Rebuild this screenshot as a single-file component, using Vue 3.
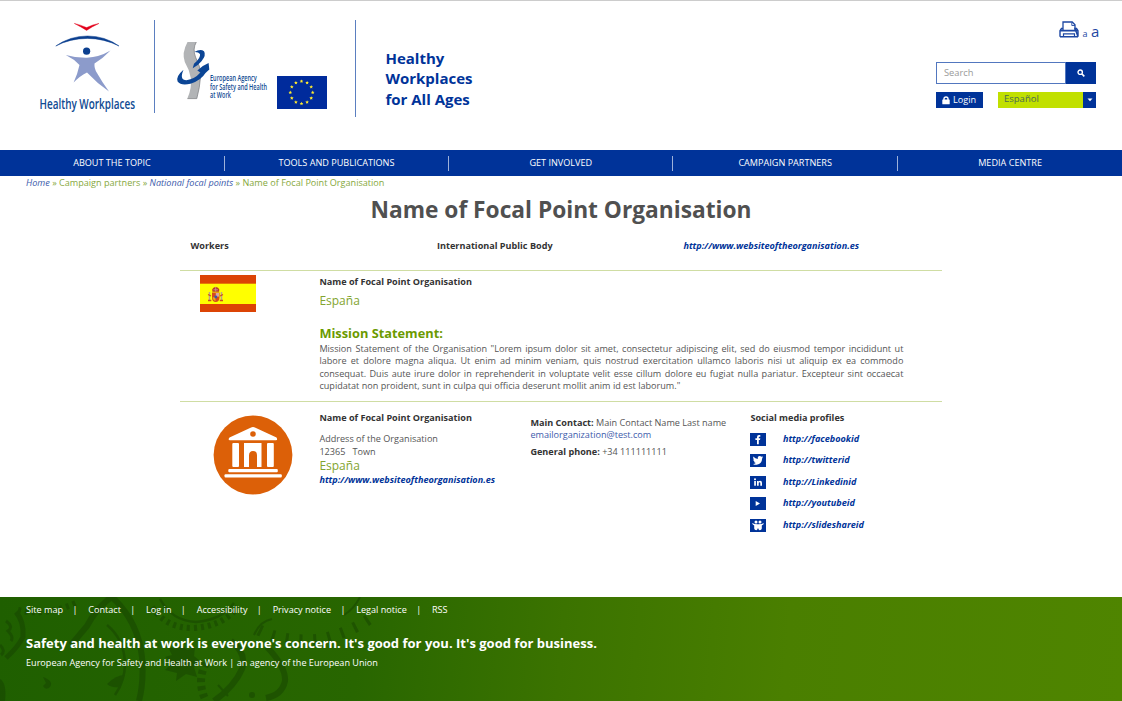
<script setup>
const nav = ['ABOUT THE TOPIC', 'TOOLS AND PUBLICATIONS', 'GET INVOLVED', 'CAMPAIGN PARTNERS', 'MEDIA CENTRE']
const footerLinks = ['Site map', 'Contact', 'Log in', 'Accessibility', 'Privacy notice', 'Legal notice', 'RSS']
const socials = [
  { id: 'facebook', url: 'http://facebookid' },
  { id: 'twitter', url: 'http://twitterid' },
  { id: 'linkedin', url: 'http://Linkedinid' },
  { id: 'youtube', url: 'http://youtubeid' },
  { id: 'slideshare', url: 'http://slideshareid' },
]
const point = (cx, cy, r, deg) => {
  const a = (deg * Math.PI) / 180
  return `${(cx + r * Math.sin(a)).toFixed(2)},${(cy - r * Math.cos(a)).toFixed(2)}`
}
const stars = Array.from({ length: 12 }, (_, i) => {
  const a = (i * Math.PI) / 6
  const cx = 24.5 + 11.2 * Math.sin(a)
  const cy = 16.5 - 11.2 * Math.cos(a)
  return Array.from({ length: 10 }, (_, k) => point(cx, cy, k % 2 ? 0.9 : 1.9, k * 36)).join(' ')
})
</script>

<template>
  <div class="page">
    <header class="header">
      <svg class="hw-logo" viewBox="36 16 104 102" width="104" height="102">
        <path d="M74.3 23.4Q80 24.6 86.6 27.6Q93 24.4 99 23.4Q92 26.6 86.6 30.4Q81 26.8 74.3 23.4Z" fill="#e2001a" stroke="#e2001a" stroke-width=".4" />
        <path d="M55.8 46Q70 36 87.5 36Q105 36 119 46Q104 38.4 87.5 38.4Q70 38.4 55.8 46Z" fill="#0b3f8f" stroke="#0b3f8f" stroke-width=".5" />
        <circle cx="86.6" cy="51.2" r="3.6" fill="#0b3f8f" />
        <path d="M65.8 55Q76 58 87 57.8Q99 57.4 110.5 50.6Q103 58.5 94.5 63.5Q94 68.5 97 73Q102 82 109 91.6Q97.5 83.6 87 72.4Q79.5 76 73.6 82.6Q77.6 74 79.5 65Q74 59 65.8 55Z" fill="#8c9bcb" />
        <text x="39.5" y="109" textLength="95.5" lengthAdjust="spacingAndGlyphs" class="hw-text">Healthy Workplaces</text>
      </svg>
      <span class="rule rule-a"></span>
      <svg class="osha-logo" viewBox="174 38 98 64" width="98" height="64">
        <path d="M187.5 42H196.3Q192.4 49 195.5 57Q201 67 200.6 76Q199.8 88 196.8 98.6H187.4Q192 88 190.8 78Q189.6 70 184.8 62Q181.5 53 187.5 42Z" fill="#b2b4b6" />
        <path d="M196.3 42Q192.4 49 195.5 57Q201 67 200.6 76Q199.8 88 196.8 98.6H187.4" fill="none" stroke="#77797c" stroke-width=".7" />
        <path d="M194.3 52Q200.500 48.600 204 51.200Q206.500 55 201.500 61.200Q197.500 66 192.700 68.300L194 63.800Q200.800 58 200 54Q198.500 51.800 194.300 52Z" fill="#0b4595" />
        <path d="M208.600 63Q202.500 65.400 197.300 70.500L200.400 72.600Q194.500 79.400 186.500 80.200Q179 80.200 183.500 69.800Q175.600 76.500 177.600 81.500Q181 86 190.500 83.700Q201 80.500 205.500 73L209.300 69.600Z" fill="#0b4595" />
        <text x="210" y="80.6" textLength="46.8" lengthAdjust="spacingAndGlyphs" class="osha-text">European Agency</text>
        <text x="210" y="89.8" textLength="57" lengthAdjust="spacingAndGlyphs" class="osha-text">for Safety and Health</text>
        <text x="210" y="98.2" textLength="21" lengthAdjust="spacingAndGlyphs" class="osha-text">at Work</text>
      </svg>
      <svg class="eu-flag" viewBox="0 0 50 33" width="50" height="33">
        <rect width="50" height="33" fill="#002b9c" />
        <polygon v-for="(s, i) in stars" :key="i" :points="s" fill="#ffec2e" />
      </svg>
      <span class="rule rule-b"></span>
      <div class="slogan">Healthy<br />Workplaces<br />for All Ages</div>
      <div class="tools">
        <div class="access">
          <svg width="20" height="18" viewBox="0 0 20 18" fill="none" stroke="#1d47a3">
            <path d="M4 9V1H13.2L16 3.800V9" stroke-width="1.300" />
            <path d="M12.800 1.500V4.500H16" stroke-width=".9" />
            <path d="M1 15.800V9.800L2.500 7.500H4M16 7.500H17.500L19 9.800V15.800Z" stroke-width="1.400" />
            <path d="M1 9.600H19M1 15.800H19" stroke-width="1.600" />
            <path d="M4.500 15.200V12.800H15.500V15.200" stroke-width="1.200" />
          </svg>
          <span class="a-small">a</span><span class="a-big">a</span>
        </div>
        <div class="search">
          <span class="field">Search</span>
          <span class="go">
            <svg width="8" height="8" viewBox="0 0 8 8" fill="none" stroke="#fff">
              <circle cx="3.2" cy="3.2" r="2.2" stroke-width="1.4" />
              <path d="M5 5L7.3 7.3" stroke-width="1.7" />
            </svg>
          </span>
        </div>
        <div class="row">
          <span class="login">
            <svg width="8" height="9" viewBox="0 0 8 9">
              <path d="M2 4V2.8Q2 1 4 1Q6 1 6 2.8V4" fill="none" stroke="#fff" stroke-width="1.4" />
              <rect x=".3" y="3.6" width="7.4" height="4.6" rx=".5" fill="#fff" />
            </svg>
            Login
          </span>
          <span class="lang">
            <span class="lang-name">Español</span>
            <span class="lang-arrow"><svg width="6" height="4" viewBox="0 0 6 4"><path d="M.5 .6H5.5L3 3.2Z" fill="#fff" /></svg></span>
          </span>
        </div>
      </div>
    </header>

    <nav class="nav"><a v-for="n in nav" :key="n"><span>{{ n }}</span></a></nav>

    <div class="crumbs"><i>Home</i> » Campaign partners » <i>National focal points</i> » Name of Focal Point Organisation</div>

    <main>
      <h1><span>Name of Focal Point Organisation</span></h1>
      <div class="facts">
        <b>Workers</b><b>International Public Body</b><a class="link">http://www.websiteoftheorganisation.es</a>
      </div>

      <section class="mission">
        <svg class="es-flag" width="56" height="37" viewBox="0 0 56 37">
          <rect width="56" height="37" fill="#dc4405" />
          <rect y="8.7" width="56" height="20.3" fill="#ffff00" />
          <path d="M9.5 17V25M21.5 17V25" stroke="#b9a58b" stroke-width="1.5" />
          <path d="M8 19.5L11 21M20 21L23 19.5M8 25.5H11.3M19.8 25.5H23" stroke="#cc4b22" stroke-width="1.3" />
          <path d="M12 17.5H19.5V23Q19 27 15.7 27Q12.3 27 12 23Z" fill="#d54a1d" />
          <path d="M12.6 22.3H15.5V26Q13 25.6 12.6 22.3Z" fill="#eda81c" />
          <path d="M15.8 18H19V21.6H15.8Z" fill="#d9a3a2" />
          <circle cx="15.8" cy="22" r="1.4" fill="#315bad" />
          <path d="M12.4 16.8Q11.5 14 13.5 12.8Q15.7 11 18 12.8Q20 14 19.1 16.8Z" fill="#b73c26" />
          <path d="M13.5 14.8H18M15.7 11.8V16.5" stroke="#cf9ca0" stroke-width=".8" />
        </svg>
        <div class="mission-body">
          <b class="org">Name of Focal Point Organisation</b>
          <div class="country">España</div>
          <h2>Mission Statement:</h2>
          <p>
            <span>Mission Statement of the Organisation "Lorem ipsum dolor sit amet, consectetur adipiscing elit, sed do eiusmod tempor incididunt ut</span>
            <span>labore et dolore magna aliqua. Ut enim ad minim veniam, quis nostrud exercitation ullamco laboris nisi ut aliquip ex ea commodo</span>
            <span>consequat. Duis aute irure dolor in reprehenderit in voluptate velit esse cillum dolore eu fugiat nulla pariatur. Excepteur sint occaecat</span>
            <span class="last">cupidatat non proident, sunt in culpa qui officia deserunt mollit anim id est laborum."</span>
          </p>
        </div>
      </section>

      <section class="details">
        <svg class="building" width="80" height="80" viewBox="0 0 80 80">
          <circle cx="40" cy="40" r="39.4" fill="#dc6008" />
          <g fill="#fff">
            <path d="M40 12Q41 12 43 13L63.5 22.4Q65 25 63 25.3H17Q14.500 25 16.500 22.400L37 13Q39 12 40 12Z" />
            <rect x="19.300" y="28" width="6.700" height="24" rx="1" />
            <path d="M31 28H48.500V52H44V40.500Q44 36 40 36Q36 36 36 40.500V52H31Z" />
            <rect x="54" y="28" width="6.800" height="24" rx="1" />
            <rect x="15.300" y="54" width="49.500" height="3.200" rx="1" />
            <rect x="11.500" y="59.300" width="57.300" height="3.300" rx="1" />
          </g>
          <circle cx="40" cy="19" r="2.800" fill="#dc6008" />
        </svg>
        <div class="address">
          <b class="org">Name of Focal Point Organisation</b>
          <div class="lines">Address of the Organisation<br />12365 &nbsp; Town</div>
          <div class="country">España</div>
          <a class="link">http://www.websiteoftheorganisation.es</a>
        </div>
        <div class="contact">
          <div><b>Main Contact:</b> Main Contact Name Last name</div>
          <div class="mail">emailorganization@test.com</div>
          <div class="phone"><b>General phone:</b> +34 111111111</div>
        </div>
        <div class="social">
          <b class="org">Social media profiles</b>
          <ul>
            <li v-for="s in socials" :key="s.id">
              <svg width="16" height="13" viewBox="0 0 16 13">
                <rect width="16" height="13" fill="#003399" />
                <path v-if="s.id === 'facebook'" d="M7 11.300V7H5.400V5.200H7V4Q7 2 9 2H10.300V3.700H9.400Q8.800 3.700 8.800 4.300V5.200H10.300L10 7H8.800V11.300Z" fill="#fff" />
                <path v-else-if="s.id === 'twitter'" d="M3.300 2.600Q5.200 4.800 7.800 4.900Q7.400 2.300 9.700 2.100Q10.700 2.100 11.300 2.800L12.800 2.300L12.100 3.500L13.100 3.300L12.100 4.500Q12 9.900 6.700 10.800Q4.600 11 3 9.900Q4.800 9.900 5.800 9Q4.400 8.800 3.900 7.600H4.800Q3.200 6.900 3.200 5.400L4 5.600Q2.700 4.400 3.300 2.600Z" fill="#fff" />
                <g v-else-if="s.id === 'linkedin'" fill="#fff">
                  <circle cx="5" cy="3.300" r="1" /><rect x="4.200" y="5" width="1.700" height="4.700" />
                  <path d="M7 5H8.600V5.700Q9.200 4.800 10.200 4.800Q12 4.900 12 7V9.700H10.300V7.300Q10.300 6.200 9.500 6.200Q8.700 6.300 8.700 7.300V9.700H7Z" />
                </g>
                <path v-else-if="s.id === 'youtube'" d="M5.700 4L10 6.500L5.700 9Z" fill="#fff" />
                <g v-else fill="#fff">
                  <circle cx="6" cy="2.900" r="1.500" /><circle cx="10" cy="2.900" r="1.500" />
                  <path d="M2 4Q4.500 5.400 8 5.300Q11.500 5.400 14 4Q13.500 5.800 11.800 6.600V9.500Q11.500 11.200 9.800 11.200Q8.500 11 8.400 9.500H7.600Q7.500 11 6.200 11.200Q4.500 11.200 4.200 9.500V6.600Q2.500 5.800 2 4Z" />
                </g>
              </svg>
              <a class="link">{{ s.url }}</a>
            </li>
          </ul>
        </div>
      </section>
    </main>

    <footer>
      <svg class="gears" width="480" height="104" viewBox="0 0 480 104" fill="none" stroke="#174300">
        <g opacity=".5">
          <path d="M71 48L87 29Q97 10 114 -2M112 0Q138 24 142 60Q144 85 139 104" stroke-width="6" />
          <path d="M107 28Q124 42 125 66Q125 84 115 98" stroke-width="2.500" />
          <path d="M107 87Q116 78 125 78L119 90Q112 91 107 87Z" fill="#174300" stroke="none" />
          <path d="M16 15Q24 24 23 40Q18 50 6 61" stroke-width="5" />
          <path d="M6 24Q14 30 8 34Q14 40 11 44M0 48Q6 54 1 58" stroke-width="3" />
          <path d="M0 82Q7 86 5 104H0Z" fill="#174300" stroke="none" />
          <path d="M18 13Q44 20 76 6" stroke-width="6" stroke-dasharray="3 4" />
          <path d="M43 80Q54 84 50 90Q46 94 43 89L46 86Z" fill="#174300" stroke="none" />
          <path d="M160 2Q172 24 196 25Q222 23 234 6" stroke-width="2.500" />
          <path d="M152 10Q166 31 192 31Q222 30 238 10" stroke-width="6" stroke-dasharray="3 4" />
          <path d="M168 50L176 52L181 47L187 53L195 50L194 59L200 64L194 70L197 80L186 77L176 84L177 76L165 73L172 66L165 60L172 58Z" fill="#174300" stroke="none" />
          <path d="M231 44Q247 56 242 72Q234 90 214 104M267 50Q286 70 285 84Q282 98 266 101" stroke-width="6" />
          <path d="M206 66Q196 84 206 104" stroke-width="8" stroke-dasharray="4 4" />
          <path d="M259 33Q284 46 322 42Q354 34 372 20" stroke-width="11" stroke-dasharray="3 11" />
          <path d="M254 38Q260 24 272 22M344 18Q354 12 360 0M218 88L228 99" stroke-width="2" />
          <circle cx="252" cy="98" r="3" fill="#174300" stroke="none" />
        </g>
      </svg>
      <div class="foot-body">
        <div class="foot-links">
          <template v-for="(f, i) in footerLinks" :key="f"><span v-if="i" class="bar">|</span><a>{{ f }}</a></template>
        </div>
        <div class="motto"><span>Safety and health at work is everyone's concern. It's good for you. It's good for business.</span></div>
        <div class="agency">European Agency for Safety and Health at Work | an agency of the European Union</div>
      </div>
    </footer>
  </div>
</template>

<style>
body { margin: 0; background: #fff; }
</style>

<style scoped>
* { box-sizing: border-box; }
.page { width: 1122px; height: 701px; overflow: hidden; display: flex; flex-direction: column; font: 9.100px/12.400px "Open Sans", sans-serif; color: #555; background: #fff; }
.header { height: 150px; flex: none; border-top: 1px solid #ccc; display: flex; align-items: flex-start; padding-left: 36px; }
.header svg { display: block; flex: none; overflow: visible; }
.hw-logo { margin-top: 15px; }
.hw-text { font: 600 14.500px "Open Sans", sans-serif; fill: #0f4a92; }
.rule { width: 1px; flex: none; background: #5b7fc0; margin-top: 19px; }
.rule-a { height: 93px; margin-left: 14.400px; }
.rule-b { height: 97px; margin-left: 27.600px; }
.osha-logo { margin: 37px 0 0 18.600px; }
.osha-text { font: 600 8.600px "Open Sans", sans-serif; fill: #0f4a92; }
.eu-flag { margin: 74.500px 0 0 5.400px; }
.slogan { margin: 46.500px 0 0 29.500px; font-size: 15px; line-height: 20.600px; font-weight: 700; color: #003399; white-space: nowrap; }
.tools { margin: 19px 26px 0 auto; width: 160px; }
.access { display: flex; align-items: flex-end; height: 20px; padding-left: 123px; color: #1d47a3; }
.access svg { position: relative; top: -1px; }
.a-small { font-size: 9px; line-height: 13px; margin-left: 3.500px; }
.a-big { font-size: 15px; line-height: 18px; margin-left: 3.500px; }
.search { display: flex; height: 22px; margin-top: 21.500px; }
.field { width: 130px; border: 1px solid #5277bf; padding-left: 7px; line-height: 20px; color: #999; font-size: 9.300px; }
.go { width: 30px; background: #003399; display: flex; align-items: center; justify-content: center; }
.row { display: flex; justify-content: space-between; margin-top: 8px; }
.login { width: 47px; height: 16px; background: #003399; color: #fff; display: flex; align-items: center; gap: 3px; padding: 1px 0 0 6px; }
.lang { width: 98px; height: 16px; display: flex; background: #c1e000; color: #4b6b50; }
.lang-name { flex: 1; padding-left: 6px; line-height: 14px; font-size: 9.500px; }
.lang-arrow { width: 13px; background: #003399; display: flex; align-items: center; justify-content: center; }
.nav { height: 25.500px; flex: none; background: #003399; display: grid; grid-template-columns: repeat(5, 1fr); align-items: center; color: #fff; text-align: center; }
.nav a { height: 15px; line-height: 14px; border-right: 1px solid #9db1da; margin: 1px -.3px 0 .3px; }
.nav a:last-child { border: 0; }
.crumbs { padding: 1.500px 0 0 26px; height: 19px; color: #86a83c; white-space: nowrap; }
.crumbs i { color: #3c5bab; }
main { height: 402.500px; flex: none; width: 762px; margin-left: 180px; }
h1 { margin: 0; height: 36.500px; font-size: 22.730px; line-height: 30px; font-weight: 700; text-align: center; color: #505050; white-space: nowrap; }
b { font-weight: 700; color: #333; }
.facts { height: 40px; border-bottom: 1px solid #cfdda3; display: grid; grid-template-columns: 246.500px 246.400px 1fr; padding: 9px 0 0 10.500px; }
.link { font-weight: 700; font-style: italic; color: #003399; }
.mission { height: 131px; border-bottom: 1px solid #cfdda3; display: flex; padding: 4px 0 0 20px; }
.es-flag { flex: none; margin-right: 63.400px; }
.mission-body { width: 584px; }
.org { display: block; }
.mission-body .org { padding-top: 1px; }
.country { color: #82a42f; font-size: 12px; line-height: 15px; }
.mission-body .country { padding-top: 5px; }
h2 { margin: 16px 0 0; color: #6b9a00; font-size: 12.800px; line-height: 18px; font-weight: 700; }
p { margin: 0; padding-top: .4px; }
p span { display: block; text-align: justify; text-align-last: justify; white-space: nowrap; }
p .last { text-align-last: left; }
.details { display: flex; padding-left: 33.400px; white-space: nowrap; }
.building { margin-top: 13px; flex: none; }
.address { margin: 10px 0 0 26px; width: 211px; }
.address .link { display: block; padding-top: 1px; }
.lines { padding-top: 9px; }
.contact { margin-top: 14.500px; width: 220px; }
.mail { color: #3c5bab; }
.phone { padding-top: 4.400px; }
.social { margin-top: 10px; }
ul { list-style: none; margin: 0; padding: 4px 0 0; }
li { display: flex; align-items: center; height: 21.500px; gap: 16.500px; }
footer { height: 104px; flex: none; position: relative; color: #fff; background: linear-gradient(95deg, #1f5f00 0%, #286600 32%, #3b7300 50%, #4a7f00 70%, #4f8500 100%); }
.gears { position: absolute; left: 0; top: 0; }
.foot-body { position: relative; padding: 7px 0 0 26px; white-space: nowrap; }
.foot-links { display: flex; }
.bar { margin: 0 10.800px 0 9.400px; }
.motto { font-size: 13.020px; line-height: 20px; font-weight: 700; padding-top: 17px; }
.agency { padding-top: 4px; }
</style>
